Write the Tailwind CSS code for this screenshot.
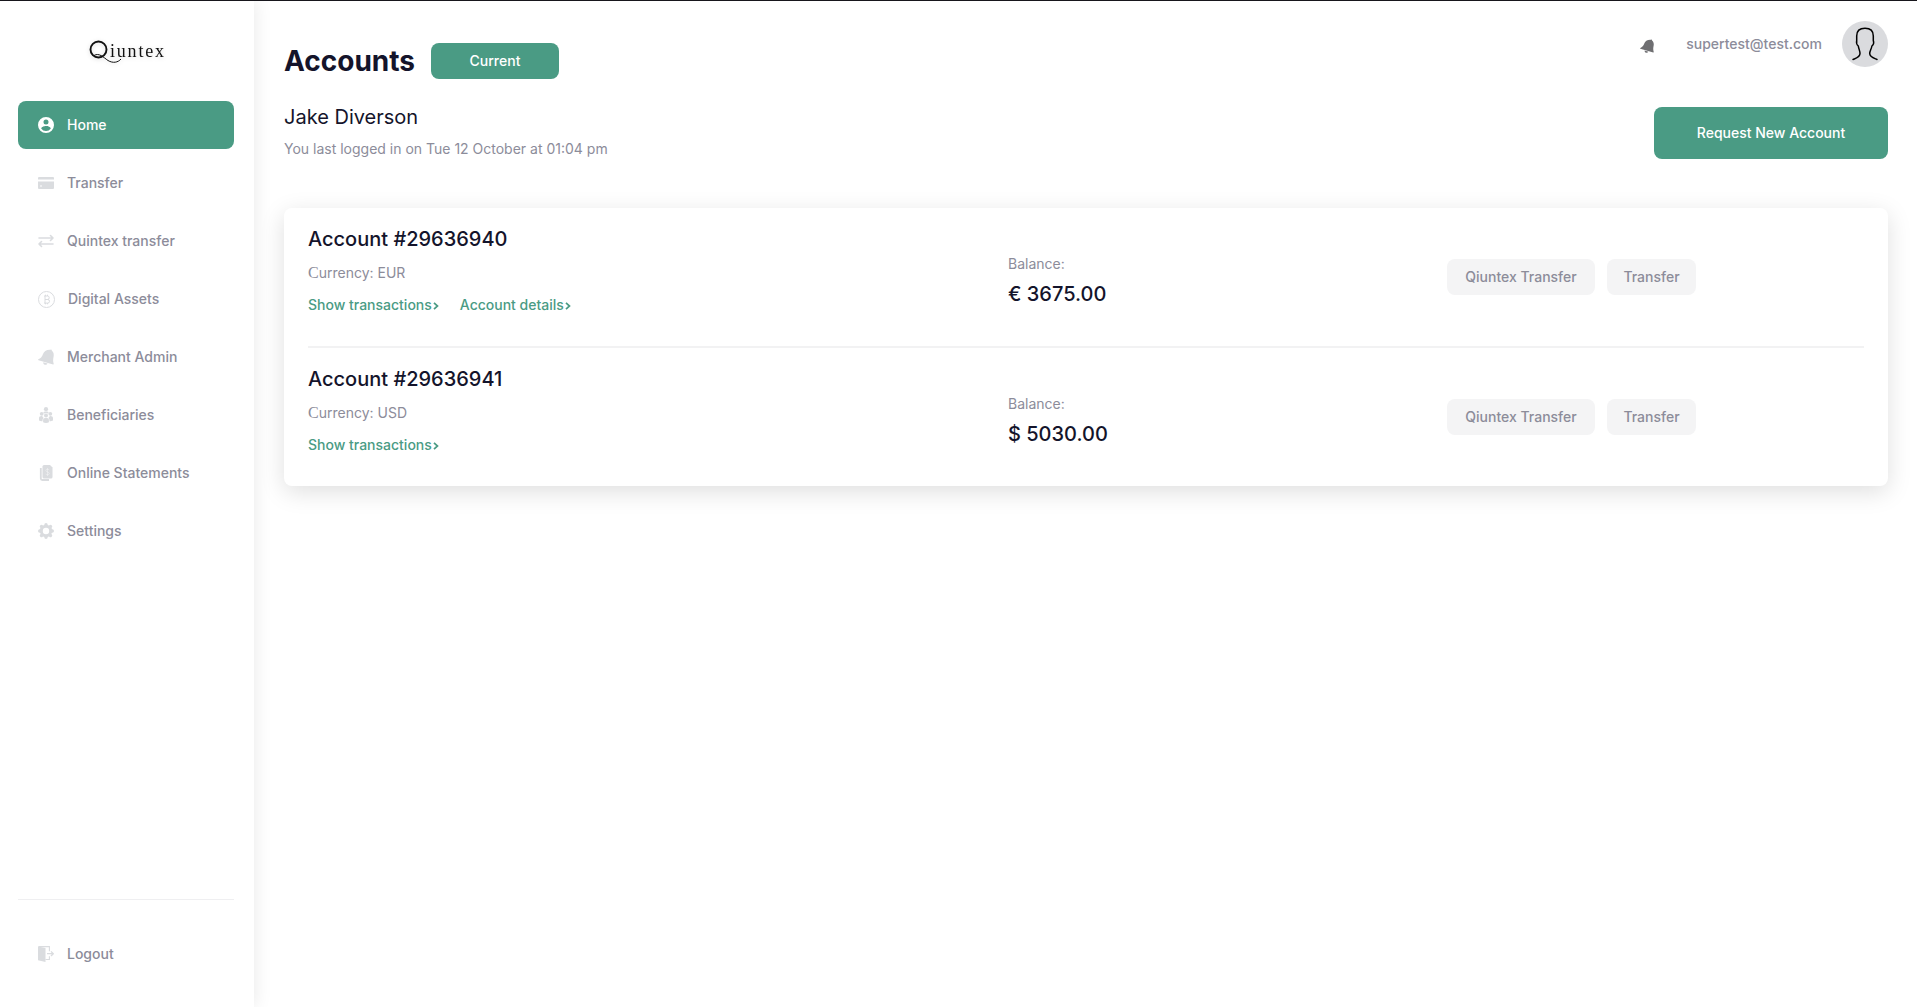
<!DOCTYPE html>
<html lang="en">
<head>
<meta charset="utf-8">
<meta name="viewport" content="width=device-width, initial-scale=1">
<title>Qiuntex - Accounts</title>
<script src="https://cdn.jsdelivr.net/npm/@tailwindcss/browser@4"></script>
</head>
<body class="flex min-h-screen border-t border-[#17161c] bg-white font-[Inter,sans-serif] text-sm text-[#8c8c9a]">

<aside class="flex w-[254px] shrink-0 flex-col pr-5 pb-[29px] pl-[18px] shadow-[2px_0_16px_rgba(0,0,0,0.08)]">
  <a href="#" aria-label="Qiuntex" class="flex h-[100px] items-center justify-center pt-1 pl-1 text-[#111]">
    <svg width="78" height="26" viewBox="0 0 78 26" fill="none" stroke="currentColor" class="overflow-visible drop-shadow-sm">
      <ellipse cx="9.500" cy="9.500" rx="8" ry="8" stroke-width="1.900"/>
      <path d="M5 15.500C10 12.500 14 17 19 20.500C24 23.500 29 22.500 32 19" stroke-width="1"/>
      <text x="21" y="17" fill="currentColor" stroke="none" font-family="Liberation Serif, serif" font-size="18" class="tracking-widest">iuntex</text>
    </svg>
  </a>
  <nav class="flex flex-col gap-2.5 font-medium">
    <a href="#" aria-current="page" class="flex h-12 items-center gap-[13px] rounded-lg bg-[#4a9b84] px-5 text-white">
      <svg class="size-4 shrink-0" viewBox="0 0 16 16" fill="currentColor"><path fill-rule="evenodd" d="M8 0a8 8 0 1 0 0 16A8 8 0 0 0 8 0Zm0 2.400a2.500 2.500 0 1 1 0 5 2.500 2.500 0 0 1 0-5ZM8 14a5.700 5.700 0 0 1-4.800-2.500C3.200 9.900 6.400 9 8 9s4.800.9 4.800 2.500A5.700 5.700 0 0 1 8 14Z"/></svg>
      Home
    </a>
    <a href="#" class="flex h-12 items-center gap-[13px] px-5">
      <svg class="size-4 shrink-0 text-[#dadcdf]" viewBox="0 0 16 16" fill="currentColor"><path d="M1 2h14a1 1 0 0 1 1 1v1.500H0V3a1 1 0 0 1 1-1Z"/><path fill-rule="evenodd" d="M0 6.500h16V13a1 1 0 0 1-1 1H1a1 1 0 0 1-1-1ZM2 10.500v1h2v-1Z"/></svg>
      Transfer
    </a>
    <a href="#" class="flex h-12 items-center gap-[13px] px-5">
      <svg class="size-4 shrink-0 text-[#dadcdf]" viewBox="0 0 16 16" fill="none" stroke="currentColor" stroke-width="1.600" stroke-linecap="round" stroke-linejoin="round"><path d="M1 5h14M12.500 2.500 15 5l-2.500 2.500M15 11H1M3.500 8.500 1 11l2.500 2.500"/></svg>
      Quintex transfer
    </a>
    <a href="#" class="flex h-12 items-center gap-[13px] px-5">
      <svg class="size-[17px] shrink-0 text-[#dadcdf]" viewBox="0 0 17 17" fill="none" stroke="currentColor"><circle cx="8.500" cy="8.500" r="8"/><path d="M6 5h3.500a1.700 1.700 0 0 1 0 3.500H7h2.700a1.800 1.800 0 0 1 0 3.600H6M7 5v7M7.500 3.700V5M9.500 3.700V5M7.500 12v1.300M9.500 12v1.300"/></svg>
      Digital Assets
    </a>
    <a href="#" class="flex h-12 items-center gap-[13px] px-5">
      <svg class="size-4 shrink-0 text-[#dadcdf]" viewBox="0 0 16 16" fill="currentColor"><path d="M12.600.8c.6-.5 1.400.1 1.100.8C15.500 3 16 5 15.600 7.500c-.4 2.600-.9 4.500.1 7.300.1.500-.2.700-.6.600L.5 11.200c-.6-.2-.6-.7-.1-1 3-1.300 3.400-2.500 4.500-5C6 2.500 8.300.5 12.600.8Z"/><path d="M5.200 13.200 9.600 14.500c-.7 1.200-1.700 1.500-2.700 1.200-1-.3-1.700-1.200-1.700-2.500Z"/></svg>
      Merchant Admin
    </a>
    <a href="#" class="flex h-12 items-center gap-[13px] px-5">
      <svg class="size-4 shrink-0 text-[#dadcdf]" viewBox="0 0 16 16" fill="currentColor"><circle cx="8" cy="2.200" r="2.100"/><circle cx="3.700" cy="6.800" r="1.900"/><circle cx="12.300" cy="6.800" r="1.900"/><circle cx="8" cy="8.600" r="2"/><path d="M5.300 5.800C5.500 4.900 6.500 4.500 8 4.500s2.500.4 2.700 1.300l-1 .8a3 3 0 0 0-3.400 0ZM1 13.500V11c0-1.400 1-2.100 3.200-2 .4.900 1 1.500 1.500 1.900-1 .6-1.200 1.600-1.200 3.300-1.500 0-2.700-.1-3.500-.7ZM15 13.500V11c0-1.400-1-2.100-3.200-2-.4.900-1 1.500-1.500 1.900 1 .6 1.200 1.600 1.200 3.300 1.500 0 2.700-.1 3.500-.7ZM5.100 15.300v-2.400c0-1.200 1.100-1.800 2.900-1.800s2.900.6 2.900 1.800v2.400c-1.500.8-4.300.8-5.800 0Z"/></svg>
      Beneficiaries
    </a>
    <a href="#" class="flex h-12 items-center gap-[13px] px-5">
      <svg class="size-4 shrink-0 text-[#dadcdf]" viewBox="0 0 16 16"><path fill="currentColor" d="M6 0h6l2.500 2.500V12a1.500 1.500 0 0 1-1.500 1.500H6A1.500 1.500 0 0 1 4.500 12V1.500A1.500 1.500 0 0 1 6 0Z"/><path d="M2.800 3v10.500A1.500 1.500 0 0 0 4.300 15H11" fill="none" stroke="currentColor" stroke-width="1.800"/><path d="M11.200 5C10.500 4 7.800 4 7.800 5.500S11.300 7 11.300 8.500 8.400 10 7.700 9M9.500 3v8" fill="none" stroke="#fff" stroke-width=".7" opacity=".5"/></svg>
      Online Statements
    </a>
    <a href="#" class="flex h-12 items-center gap-[13px] px-5">
      <svg class="size-4 shrink-0 text-[#dadcdf]" viewBox="0 0 16 16" fill="none" stroke="currentColor"><circle cx="8" cy="8" r="4.700" stroke-width="3"/><path stroke-width="3.400" stroke-linecap="round" d="M8 1.700v.5M8 13.800v.5M1.700 8h.5M13.800 8h.5M3.500 3.500l.4.400M12.100 12.100l.4.400M3.500 12.500l.4-.4M12.100 3.900l.4-.4"/></svg>
      Settings
    </a>
  </nav>
  <div class="mt-auto border-t border-[#efeff1] pt-[30px] font-medium">
    <a href="#" class="flex h-12 items-center gap-[13px] px-5">
      <svg class="size-4 shrink-0 text-[#dadcdf]" viewBox="0 0 16 16"><path fill="currentColor" d="M0 .5 7.500 2v14L0 14.200Z"/><path d="M.5.6h10.900v4.600M7.500 13.500h3.900v-3.300" fill="none" stroke="currentColor" stroke-width="1.100"/><path d="M9 7.700h6.200M13 5.400l2.300 2.300L13 10" fill="none" stroke="currentColor" stroke-width="1.300"/></svg>
      Logout
    </a>
  </div>
</aside>

<main class="min-w-0 flex-1 pt-5 pr-[29px] pl-[30px]">
  <header class="flex justify-between">
    <div class="pt-[22px]">
      <div class="flex items-center gap-4">
        <h1 class="text-[28px] leading-9 font-bold text-[#14142b]">Accounts</h1>
        <button class="h-9 w-32 rounded-lg bg-[#4a9b84] font-medium text-white">Current</button>
      </div>
      <h2 class="mt-[26px] text-xl leading-6 text-[#14142b]">Jake Diverson</h2>
      <p class="mt-2.5 leading-5">You last logged in on Tue 12 October at 01:04 pm</p>
    </div>
    <div class="flex flex-col items-end gap-10">
      <div class="flex h-[46px] items-center">
        <button aria-label="Notifications" class="mr-8 pt-1 text-[#6f6f72]">
          <svg class="size-3.5" viewBox="0 0 16 16" fill="currentColor"><path d="M12.600.8c.6-.5 1.400.1 1.100.8C15.500 3 16 5 15.600 7.500c-.4 2.600-.9 4.500.1 7.300.1.500-.2.700-.6.600L.5 11.200c-.6-.2-.6-.7-.1-1 3-1.300 3.400-2.500 4.500-5C6 2.500 8.300.5 12.600.8Z"/><path d="M5.200 13.200 9.600 14.500c-.7 1.200-1.700 1.500-2.700 1.200-1-.3-1.700-1.200-1.700-2.500Z"/></svg>
        </button>
        <span class="mr-5 font-medium">supertest@test.com</span>
        <button aria-label="Profile" class="size-[46px] rounded-full bg-[#dadbde] text-black">
          <svg class="size-[46px]" viewBox="0 0 46 46" fill="none" stroke="currentColor" stroke-width="1.500" stroke-linecap="round" stroke-linejoin="round"><path d="M11 38.500c3-1.300 7-2.300 7-6 0-2.700-1.200-4.200-1.700-7.500-1.500-1.200-2-3.500-1.600-5.500V15c0-5 2.500-7.700 8.300-7.700S31.300 10 31.300 15v4.500c.7 2 .1 4.300-1.400 5.500-.5 3.300-2.200 4.800-2.200 7.500 0 3.700 4.300 4.700 7.300 6"/></svg>
        </button>
      </div>
      <button class="h-[52px] w-[234px] rounded-lg bg-[#4a9b84] font-medium text-white">Request New Account</button>
    </div>
  </header>

  <section class="mt-[49px] rounded-lg bg-white px-6 shadow-[0_6px_24px_rgba(0,0,0,0.13)]">
    <article class="grid grid-cols-[700fr_439fr_417fr] items-center border-b-2 border-[#f2f2f3] pt-[19px] pb-[31px]">
      <div>
        <h3 class="text-xl leading-6 font-medium text-[#14142b]">Account #29636940</h3>
        <p class="mt-3 leading-5"><span class="font-[Liberation_Serif,serif] text-base leading-5">C</span>urrency: EUR</p>
        <div class="mt-3 flex gap-5 leading-5 font-medium text-[#4a9b84]">
          <a href="#" class="flex items-center">Show transactions<svg class="mt-0.5 size-2" viewBox="0 0 8 8" fill="none" stroke="currentColor" stroke-width="1.700"><path d="m2 .8 3.500 3.200L2 7.200"/></svg></a>
          <a href="#" class="flex items-center">Account details<svg class="mt-0.5 size-2" viewBox="0 0 8 8" fill="none" stroke="currentColor" stroke-width="1.700"><path d="m2 .8 3.500 3.200L2 7.200"/></svg></a>
        </div>
      </div>
      <div class="pt-[18px]">
        <p class="leading-5">Balance:</p>
        <p class="mt-2 text-xl leading-6 font-medium text-[#14142b]">€ 3675.00</p>
      </div>
      <div class="flex gap-3 pt-3 font-medium">
        <button class="h-9 w-[148px] rounded-lg bg-[#f4f4f5]">Qiuntex Transfer</button>
        <button class="h-9 w-[89px] rounded-lg bg-[#f4f4f5]">Transfer</button>
      </div>
    </article>
    <article class="grid grid-cols-[700fr_439fr_417fr] items-center pt-[19px] pb-[31px]">
      <div>
        <h3 class="text-xl leading-6 font-medium text-[#14142b]">Account #29636941</h3>
        <p class="mt-3 leading-5"><span class="font-[Liberation_Serif,serif] text-base leading-5">C</span>urrency: USD</p>
        <div class="mt-3 flex gap-5 leading-5 font-medium text-[#4a9b84]">
          <a href="#" class="flex items-center">Show transactions<svg class="mt-0.5 size-2" viewBox="0 0 8 8" fill="none" stroke="currentColor" stroke-width="1.700"><path d="m2 .8 3.500 3.200L2 7.200"/></svg></a>
        </div>
      </div>
      <div class="pt-[18px]">
        <p class="leading-5">Balance:</p>
        <p class="mt-2 text-xl leading-6 font-medium text-[#14142b]">$ 5030.00</p>
      </div>
      <div class="flex gap-3 pt-3 font-medium">
        <button class="h-9 w-[148px] rounded-lg bg-[#f4f4f5]">Qiuntex Transfer</button>
        <button class="h-9 w-[89px] rounded-lg bg-[#f4f4f5]">Transfer</button>
      </div>
    </article>
  </section>
</main>
</body>
</html>
